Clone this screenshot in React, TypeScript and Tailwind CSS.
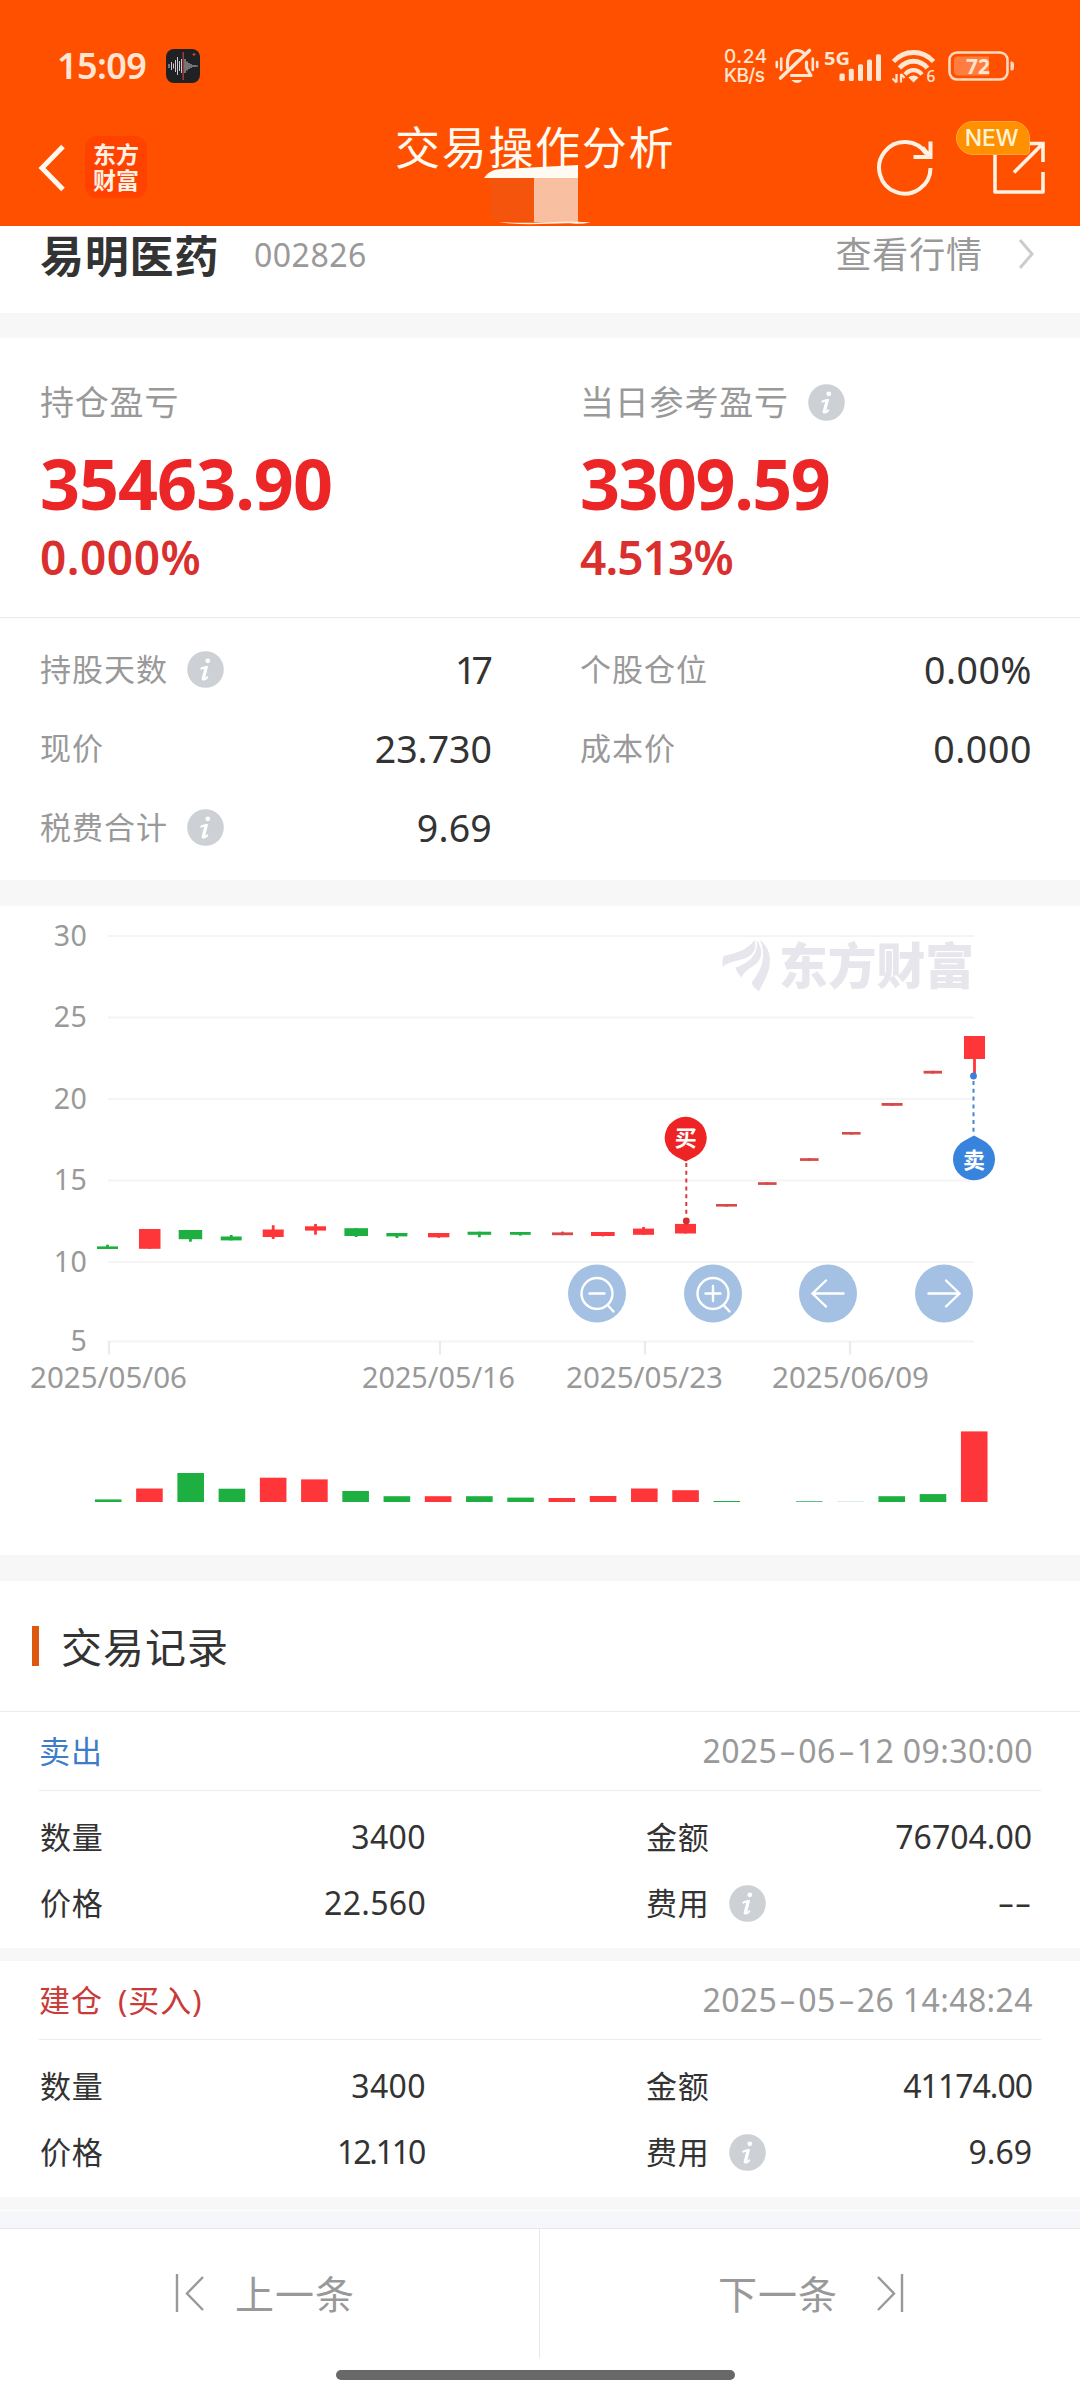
import type { ReactNode } from 'react';

const RED = '#ff3639';
const GREEN = '#1db041';

// ── Chart data ───────────────────────────────────────────────────────────────
// x, width, body top, body bottom, wick top, wick bottom, rising
type Candle = [number, number, number, number, number, number, boolean];

const candles: Candle[] = [
  [97, 21, 1246.4, 1249, 1244.7, 1249, false],
  [139, 21.5, 1229, 1248.8, 1229, 1248.8, true],
  [178.7, 23.5, 1230, 1239.2, 1230, 1241.7, false],
  [220.7, 21, 1236.5, 1240.4, 1235, 1240.4, false],
  [262.7, 21, 1229.5, 1237, 1225.2, 1239, true],
  [305, 21, 1226.3, 1230.6, 1223.9, 1234.7, true],
  [344.4, 23.6, 1228.2, 1236, 1228.2, 1237, false],
  [386.4, 21, 1233, 1236.4, 1233, 1238, false],
  [428, 21.4, 1233, 1237.3, 1233, 1237.8, true],
  [467.6, 23.6, 1231.7, 1234.8, 1231.7, 1237.3, false],
  [510, 20.7, 1232, 1234.8, 1232, 1235.6, false],
  [552, 21, 1232.4, 1235.2, 1231.6, 1235.2, true],
  [591, 23.7, 1232, 1236, 1232, 1236.4, true],
  [633, 21, 1228.6, 1234.8, 1227, 1234.8, true],
  [675, 21, 1223.9, 1233.5, 1222, 1233.5, true],
  [716, 21, 1204, 1206.6, 1204, 1206.6, true],
  [758, 18.6, 1182.2, 1184.9, 1182.2, 1184.9, true],
  [800, 18.6, 1158.2, 1160.9, 1158.2, 1160.9, true],
  [842, 18.6, 1132, 1134.6, 1132, 1134.6, true],
  [881.6, 21, 1103, 1105.8, 1103, 1105.8, true],
  [923.6, 18.4, 1070.8, 1073.6, 1070.8, 1073.6, true],
  [964, 21, 1036, 1059, 1036, 1073, true],
];

const volumes: [number, string][] = [
  [2.6, GREEN], [13.5, RED], [29, GREEN], [13.3, GREEN], [24.3, RED], [22.6, RED],
  [11, GREEN], [5.8, GREEN], [5.8, RED], [5.8, GREEN], [4.4, GREEN], [4, RED],
  [6, RED], [13.5, RED], [11.8, RED], [1, GREEN], [0, GREEN], [1, '#5fbf8d'],
  [1, '#dcebe3'], [5.8, GREEN], [7.9, GREEN], [70.6, RED],
];

const yTicks = [
  { label: '30', y: 936 },
  { label: '25', y: 1017.5 },
  { label: '20', y: 1099 },
  { label: '15', y: 1180.5 },
  { label: '10', y: 1262 },
  { label: '5', y: 1341.5 },
];

const xTicks = [
  { label: '2025/05/06', x: 109, from: 30, width: 157 },
  { label: '2025/05/16', x: 440, from: 362, width: 153 },
  { label: '2025/05/23', x: 645, from: 566, width: 157 },
  { label: '2025/06/09', x: 850, from: 772, width: 157 },
];

const records = [
  {
    type: '卖出', color: 'text-[#3d7cc9]', time: '2025-06-12 09:30:00',
    qty: '3400', amount: '76704.00', price: '22.560', fee: '--',
    amountClass: '', priceClass: 'tracking-[0.3px]', feeClass: 'inline-block origin-right scale-x-[1.65]',
  },
  {
    type: '建仓 (买入)', color: 'text-[#c93a38]', time: '2025-05-26 14:48:24',
    qty: '3400', amount: '41174.00', price: '12.110', fee: '9.69',
    amountClass: 'tracking-[-1px]', priceClass: 'tracking-[-2.2px] pr-[2px]', feeClass: '',
  },
];

function InfoIcon() {
  return (
    <svg className="w-[37px] h-[37px] shrink-0" viewBox="0 0 37 37">
      <circle cx="18.5" cy="18.5" r="18.3" fill="#cdd0d5" />
      <circle cx="20.8" cy="9.8" r="2.4" fill="#fff" />
      <path d="M14.4 17.6c1.8-.6 3.400-1.500 5.200-1.500l-2.800 11.200c-.3 1.700 1.600 1.200 3.400-.9" fill="none" stroke="#fff" strokeWidth="2.2" strokeLinecap="round" />
      <path d="M19 17l-2.9 11" stroke="#fff" strokeWidth="3" strokeLinecap="round" />
    </svg>
  );
}

function StatusBar() {
  return (
    <div className="h-[132px] flex items-center pl-[57px] pr-[65px] text-[#ffe6d2]">
      <span className="w-[94px] text-[36px] leading-none font-semibold tracking-[-0.6px] whitespace-nowrap">15:09</span>
      <svg className="w-[34px] h-[34px] ml-[15px]" viewBox="0 0 34 34">
        <rect width="34" height="34" rx="8" fill="#202124" />
        <path d="M3 15v4M5.5 13v8M7.5 14.5v5M9.5 11v12M11.5 8v18M13.5 12v10M15.5 10v14M19 10v14M21 12.5v9M23 14v6M25 15v4M27 16v2M29 16v2M31 16.3v1.5" stroke="#c9c9cb" strokeWidth="1" />
        <path d="M17.2 3v28" stroke="#b1413f" strokeWidth="1.3" />
        <path d="M28 4v3M26.500 5.500h3" stroke="#d64a3f" strokeWidth="1" />
      </svg>

      <div className="ml-auto flex items-center">
        <div className="w-[43px] font-['Inter','Noto_Sans',sans-serif] text-[19px] leading-[19px] font-medium">
          <div className="tracking-[0.6px]">0.24</div>
          <div className="tracking-[-0.6px]">KB/s</div>
        </div>
        {/* muted bell */}
        <svg className="w-[44px] h-[38px] ml-[8px]" viewBox="0 0 44 38" fill="none" stroke="currentColor" strokeWidth="3.2" strokeLinecap="round">
          <path d="M12.500 21v-5.500c0-7 4-12 9.500-12 3 0 5 .9 6.800 2.700" />
          <path d="M31.500 15v6l4.500 7.500H16.500" strokeLinejoin="round" />
          <path d="M5.500 31L34.500 3.500" strokeWidth="3.6" />
          <path d="M17.500 33.5h9c-1 2.500-8 2.500-9 0z" fill="currentColor" strokeWidth="1" />
          <path d="M1.800 15v5M6.200 11.500v11.500M37.800 11.500v11.500M42.200 15v5" strokeWidth="2.600" />
        </svg>
        {/* signal */}
        <svg className="w-[60px] h-[34px] ml-[5px] overflow-visible" viewBox="0 0 60 34" fill="currentColor">
          <text x="0" y="16" fontSize="18.500" fontWeight="700" textLength="26" lengthAdjust="spacingAndGlyphs">5G</text>
          <rect x="15.500" y="24.500" width="5.300" height="7.500" rx="1.500" />
          <rect x="24.800" y="19.700" width="5" height="12.300" rx="1.500" />
          <rect x="34" y="15.300" width="5" height="16.700" rx="1.500" />
          <rect x="43" y="10.500" width="5" height="21.500" rx="1.500" />
          <rect x="52" y="5.300" width="5" height="26.700" rx="1.500" />
        </svg>
        {/* wifi */}
        <svg className="w-[45px] h-[36px] ml-[7px] overflow-visible" viewBox="0 0 45 36" fill="none" stroke="currentColor" strokeWidth="4.800">
          <path d="M2.500 13.500C13.500 1.500 31.500 1.500 42.500 13.500" />
          <path d="M8.500 20C16.500 11 28.500 11 36.500 20" />
          <path d="M14 26.500C19 20.700 26 20.700 31 26.500" strokeWidth="4.200" />
          <path d="M22.500 34.500l-5-5c2.500-2.800 7.500-2.800 10 0z" fill="currentColor" stroke="none" />
          <path d="M5.500 26v8.500M1.500 30.500l4 4M10 34.500V26M13.500 30L10 26" strokeWidth="2.200" />
          <text x="35.500" y="34" fontSize="15.500" fontWeight="500" stroke="none" fill="currentColor">6</text>
        </svg>
        {/* battery */}
        <svg className="w-[67px] h-[32px] ml-[12px]" viewBox="0 0 67 32">
          <rect x="1.500" y="2.500" width="58" height="27" rx="7.500" fill="none" stroke="#ffd9bd" strokeWidth="2.600" />
          <path d="M10 6.500h31v19H10a4 4 0 0 1-4-4v-11a4 4 0 0 1 4-4z" fill="#ff7d3e" />
          <path d="M62.500 11.500h1a2.500 2.500 0 0 1 2.500 2.500v4a2.500 2.500 0 0 1-2.500 2.500h-1z" fill="#ffd9bd" />
          <text x="18" y="24" fontSize="22" fontWeight="700" fill="currentColor" textLength="24" lengthAdjust="spacingAndGlyphs">72</text>
        </svg>
      </div>
    </div>
  );
}

function Header() {
  return (
    <header className="relative h-[226px] bg-[#ff5000]">
      <StatusBar />

      <div className="flex items-start h-[94px] pl-[38px] pr-[34px]">
        <svg className="w-[28px] h-[48px] mt-[12px]" viewBox="0 0 28 48">
          <path d="M25 2.500L4 24l21 21.500" fill="none" stroke="#fff8f0" strokeWidth="5" />
        </svg>
        <div className="w-[62px] h-[62px] ml-[19px] mt-[4px] rounded-[12px] bg-[#ff4200] text-[#fff0e4] text-[23px] leading-[26px] font-bold flex flex-col items-center justify-center">
          <div>东方</div>
          <div>财富</div>
        </div>

        <div className="ml-auto flex">
          <svg className="w-[58px] h-[60px] mt-[6px]" viewBox="0 0 58 60" fill="none" stroke="#fff1e4" strokeWidth="4">
            <path d="M54.500 30A25.700 25.800 0 1 1 50.500 16" />
            <path d="M54.500 3.500V19H37.500M46.500 9.500L54 18.500" />
          </svg>
          <svg className="w-[56px] h-[58px] ml-[56px] mt-[6px]" viewBox="0 0 56 58" fill="none" stroke="#fff1e4" strokeWidth="3.600">
            <path d="M32 5.500H5V54H53V34" strokeLinejoin="round" />
            <path d="M34 5.500H53V24M53 5.500L24 34.500" />
          </svg>
        </div>
      </div>

      <h1 className="absolute left-[395px] top-[118px] text-[45px] leading-[60px] tracking-[1.7px] text-[#fffaf2] whitespace-nowrap">
        交易操作分析
      </h1>
      {/* smear under the title */}
      <svg className="absolute left-[480px] top-[164px] w-[116px] h-[62px]" viewBox="0 0 116 62">
        <rect x="10" y="13" width="44" height="44" fill="#f5540c" />
        <rect x="54" y="13" width="44" height="45" fill="#f8bfa0" />
        <path d="M4 14C8 8 14 5 22 5L60 3 98 1V14z" fill="#fffaf2" />
        <path d="M18 58C40 59.500 62 58.500 86 57.500c10 0 16 .5 25 .8-9 2-14 1.600-24 1-22 .4-45 2.600-69-1.300z" fill="#fff0e4" />
      </svg>
      <span className="absolute left-[956px] top-[121px] w-[74px] h-[34px] rounded-[17px] rounded-br-[4px] border border-[#ffa53d] bg-[#ff9000] text-[#fff3d6] font-['Inter','Noto_Sans',sans-serif] text-[23px] leading-[33px] pr-[3px] tracking-[-0.3px] font-medium text-center">
        NEW
      </span>
    </header>
  );
}

function Stat({ label, value, info, valueClass = 'tracking-[0.2px]' }: { label: string; value: string; info?: boolean; valueClass?: string }) {
  return (
    <div className="flex items-center h-[79px]">
      <span className="text-[31px] tracking-[1px] text-[#999]">{label}</span>
      {info && <span className="ml-[19px]"><InfoIcon /></span>}
      <span className={`ml-auto text-[37.5px] text-[#333] ${valueClass}`}>{value}</span>
    </div>
  );
}

type ProfitProps = { label: string; amount: string; percent: string; info?: boolean; amountClass: string; percentClass: string };

function Profit({ label, amount, percent, info, amountClass, percentClass }: ProfitProps) {
  return (
    <div className="h-[278px] pt-[40px]">
      <div className="flex items-center h-[48px] text-[34px] tracking-[0.8px] text-[#999]">
        {label}
        {info && <span className="ml-[19px]"><InfoIcon /></span>}
      </div>
      <div className={`h-[60px] mt-[27px] text-[70px] leading-[60px] font-bold text-[#ec2626] ${amountClass}`}>{amount}</div>
      <div className={`h-[48px] mt-[20px] text-[46px] leading-[48px] font-semibold text-[#da2f2f] ${percentClass}`}>{percent}</div>
    </div>
  );
}

function ChartButton({ x, children }: { x: number; children: ReactNode }) {
  return (
    <g transform={`translate(${x} 1293.5)`} fill="none" stroke="#fff" strokeWidth="2.4" strokeLinecap="round">
      <circle r="29" fill="#a4c1e3" stroke="none" />
      {children}
    </g>
  );
}

function Chart() {
  return (
    <svg className="block w-[1080px] h-[649px]" viewBox="0 906 1080 649">
      {yTicks.map(t => (
        <g key={t.label}>
          <path d={`M108 ${t.y}H974`} stroke="#f4f4f5" strokeWidth="2.2" />
          <text x="87" y={t.y + 9.5} textAnchor="end" fontSize="28.5" letterSpacing="0.3" fill="#999">{t.label}</text>
        </g>
      ))}
      {xTicks.map(t => (
        <g key={t.label}>
          <path d={`M${t.x} 1341v13.5`} stroke="#ebebed" strokeWidth="2.2" />
          <text x={t.from} y="1387.5" fontSize="28.5" fill="#999" textLength={t.width} lengthAdjust="spacingAndGlyphs">{t.label}</text>
        </g>
      ))}

      {/* Watermark */}
      <g fill="#e6e6ec">
        <path d="M722.700 966.700C722.500 961 722 957 725 955.500C735 953.500 748 950 754.500 940C757 948 754 954 747 957.500C739 961 730 961 722.700 966.700z" />
        <path d="M756.700 940C762.500 948 763 957 757 963C751 968 744 971 741.500 977.500C738 974 736.500 971 735.500 967.500C748 963.500 759 955 756.700 940z" />
        <path d="M760 940C768 946 771 955 769.500 966C768 976 762 984 759 991.500C755.500 988.500 753 986.500 751.500 983C759 972 768 960 760 940z" />
        <text x="779" y="984" fontSize="49" fontWeight="900" textLength="195" lengthAdjust="spacingAndGlyphs">东方财富</text>
      </g>

      {/* Candles */}
      {candles.map(([x, w, top, bottom, high, low, up]) => (
        <g key={x} fill={up ? (bottom - top < 3 ? '#d84a4a' : RED) : GREEN}>
          <rect x={x} y={top} width={w} height={bottom - top} />
          <rect x={x + w / 2 - 1.4} y={high} width="2.8" height={low - high} />
        </g>
      ))}

      {/* Volume */}
      {volumes.map(([h, color], i) => (
        <rect key={i} x={94.9 + i * 41.24} y={1502 - h} width="26.6" height={h} fill={color} />
      ))}

      {/* Buy marker */}
      <path d="M686.3 1163v54" stroke="#d63a3a" strokeWidth="2" strokeDasharray="4 3.8" />
      <circle cx="686.3" cy="1221" r="3.4" fill="#d92b2b" />
      <path d="M685.7 1161.500L676 1156.500A21 21 0 1 1 695.400 1156.500z" fill="#ee2323" />
      <text x="685.7" y="1145.5" textAnchor="middle" fontSize="22" fontWeight="700" fill="#fff">买</text>

      {/* Sell marker */}
      <path d="M973.5 1081v54" stroke="#4a86cc" strokeWidth="2" strokeDasharray="4 3.8" />
      <circle cx="973.5" cy="1076" r="3.4" fill="#3a80d8" />
      <path d="M974 1135.500L983.700 1140.700A21 21 0 1 1 964.300 1140.700z" fill="#3883dc" />
      <text x="974" y="1168" textAnchor="middle" fontSize="22" fontWeight="700" fill="#fff">卖</text>

      <ChartButton x={597}>
        <circle r="15.5" />
        <path d="M-7.5 0h15M11 12l5.5 6" />
      </ChartButton>
      <ChartButton x={713}>
        <circle r="15.5" />
        <path d="M-7.5 0h15M0-7.5v15M11 12l5.5 6" />
      </ChartButton>
      <ChartButton x={828}>
        <path d="M15.5 0h-31M-2-13l-13.5 13 13.5 13" />
      </ChartButton>
      <ChartButton x={944}>
        <path d="M-15.5 0h31M2-13l13.5 13-13.5 13" />
      </ChartButton>
    </svg>
  );
}

// Date part is drawn with wide dashes
function Timestamp({ time }: { time: string }) {
  return (
    <span className="mr-[8px] text-[32px] tracking-[0.4px] text-[#999] whitespace-nowrap">
      {time.split('-').map((part, i) => (
        <span key={i}>
          {i > 0 && <span className="inline-block w-[21px] text-center tracking-normal scale-x-[1.65]">-</span>}
          {part}
        </span>
      ))}
    </span>
  );
}

function RecordCell({ label, value, info, valueClass = '' }: { label: string; value: string; info?: boolean; valueClass?: string }) {
  return (
    <div className="flex items-center h-[66px] text-[#333]">
      <span className="text-[31px] tracking-[0.8px]">{label}</span>
      {info && <span className="ml-[19px]"><InfoIcon /></span>}
      <span className={`ml-auto text-[32px] ${valueClass}`}>{value}</span>
    </div>
  );
}

export default function App() {
  return (
    <div className="w-[1080px] h-[2400px] overflow-hidden flex flex-col bg-white leading-none font-['Noto_Sans','Noto_Sans_CJK_SC',sans-serif]">
      <Header />

      {/* Stock name */}
      <section className="h-[87px] flex items-start pl-[40px] pr-[46px]">
        <span className="mt-[8px] w-[181px] text-[44px] font-bold tracking-[0.8px] text-[#333] whitespace-nowrap">易明医药</span>
        <span className="mt-[13px] ml-[33px] text-[32px] leading-[32px] tracking-[0.5px] text-[#999]">002826</span>
        <span className="mt-[11px] ml-auto text-[36px] tracking-[0.9px] text-[#999]">查看行情</span>
        <svg className="w-[16px] h-[32px] mt-[12px] ml-[35px]" viewBox="0 0 16 32">
          <path d="M2 2l12 14L2 30" fill="none" stroke="#ccc" strokeWidth="3" />
        </svg>
      </section>
      <div className="h-[25px] bg-[#f7f7f7]" />

      {/* Profit and holding stats */}
      <section className="h-[542px]">
        <div className="grid grid-cols-[540px_1fr] pl-[40px] border-b border-[#ebebeb] h-[280px]">
          <Profit label="持仓盈亏" amount="35463.90" percent="0.000%" amountClass="tracking-[-1px]" percentClass="tracking-[0.5px]" />
          <Profit label="当日参考盈亏" amount="3309.59" percent="4.513%" amountClass="tracking-[-1.5px]" percentClass="tracking-[-0.9px]" info />
        </div>
        <div className="grid grid-cols-2 gap-x-[88px] pl-[40px] pr-[48px] pt-[12px]">
          <Stat label="持股天数" value="17" valueClass="tracking-[-5px] pr-[4px]" info />
          <Stat label="个股仓位" value="0.00%" valueClass="tracking-[0.5px]" />
          <Stat label="现价" value="23.730" valueClass="" />
          <Stat label="成本价" value="0.000" valueClass="tracking-[0.6px]" />
          <Stat label="税费合计" value="9.69" info />
        </div>
      </section>
      <div className="h-[26px] bg-[#f7f7f7]" />

      <Chart />
      <div className="h-[26px] bg-[#f7f7f7]" />

      {/* Trade records */}
      <div className="h-[131px] flex items-center pl-[32px] border-b border-[#ececec]">
        <span className="w-[7px] h-[40px] bg-[#dc5a10]" />
        <h2 className="ml-[22px] pt-[2px] text-[41px] tracking-[1px] text-[#333]">交易记录</h2>
      </div>
      {records.map(r => (
        <section key={r.time} className="h-[249px] border-b-[13px] border-[#f7f7f7]">
          <div className="mx-[39px] h-[79px] flex items-center justify-between border-b border-[#ececec]">
            <span className={`text-[31px] tracking-[1px] [word-spacing:6px] ${r.color}`}>{r.type}</span>
            <Timestamp time={r.time} />
          </div>
          <div className="pl-[40px] pr-[48px] pt-[13px] grid grid-cols-[386px_386px] gap-x-[220px]">
            <RecordCell label="数量" value={r.qty} valueClass="tracking-[0.4px]" />
            <RecordCell label="金额" value={r.amount} valueClass={r.amountClass} />
            <RecordCell label="价格" value={r.price} valueClass={r.priceClass} />
            <RecordCell label="费用" value={r.fee} valueClass={r.feeClass} info />
          </div>
        </section>
      ))}
      <div className="h-[17px] mt-px bg-[#f6f7fa]" />

      {/* Prev / next */}
      <nav className="h-[130px] flex border-t border-[#e8e8e8] text-[39px] tracking-[1px] text-[#999]">
        <div className="w-[540px] flex items-center pl-[174px] pb-px border-r border-[#e8e8e8]">
          <svg className="w-[32px] h-[40px]" viewBox="0 0 32 40" fill="none" stroke="#999" strokeWidth="2.4">
            <path d="M3 1v38M29 4L13 20.500 29 37" />
          </svg>
          <span className="ml-[29px]">上一条</span>
        </div>
        <div className="flex-1 flex items-center pl-[178px] pb-px">
          <span>下一条</span>
          <svg className="w-[32px] h-[40px] ml-[37px]" viewBox="0 0 32 40" fill="none" stroke="#999" strokeWidth="2.4">
            <path d="M3 4l16 16.500L3 37M27 1v38" />
          </svg>
        </div>
      </nav>
      <div className="mt-[12px] ml-[336px] w-[399px] h-[10px] rounded-full bg-[#686868]" />
    </div>
  );
}
